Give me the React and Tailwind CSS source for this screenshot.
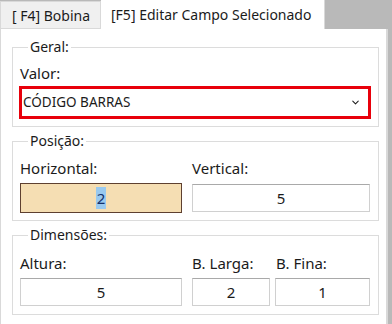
import { ChevronDown } from 'lucide-react';

const Field = ({ value, active = false, className = '' }) => (
    <div
        className={`flex items-center justify-center text-[15px] ${
            active
                ? 'bg-[#f5deb3] border border-[#5e4030] h-[30px]'
                : 'bg-white border border-[#d0d0d0] border-t-[#a9a9a9] h-[28px] mt-[1px]'
        } ${className}`}
    >
        {active ? <span className="bg-[#99c9ef] text-[#14306b] px-[1px] leading-[22px]">{value}</span> : value}
    </div>
);

const Group = ({ title, children, className = '' }) => (
    <fieldset className={`border border-[#dcdcdc] px-[6px] ${className}`}>
        <legend className="ml-[9px] px-[2px] leading-[20px] text-[14px]">{title}</legend>
        {children}
    </fieldset>
);

export default function App() {
    return (
        <div className="w-[392px] h-[324px] bg-[#b9b9b9] flex flex-col text-[#1b1b1b] font-['Noto_Sans',sans-serif] overflow-hidden">
            {/* Tabs */}
            <div className="flex h-[29px] shrink-0">
                <div className="w-[101px] mt-[1px] bg-[#f0f0f0] border border-[#d9d9d9] flex items-center pl-[11px] text-[14px] whitespace-nowrap">
                    [ F4] Bobina
                </div>
                <div className="w-[224px] bg-white border-r border-[#d9d9d9] flex items-center pl-[10px] text-[14px] whitespace-nowrap">
                    [F5] Editar Campo Selecionado
                </div>
            </div>

            {/* Panel */}
            <div className="flex-1 w-[388px] bg-white border-l border-r-2 border-[#d9d9d9] pl-[11px] pr-[7px] pt-[8px]">
                <Group title="Geral:" className="pb-[7px]">
                    <div className="mt-[6px] leading-[20px] text-[15px] pl-[1px]">Valor:</div>
                    <div className="mt-[3px] h-[33px] border-[3px] border-[#e8000b] flex items-center justify-between pl-[1px] pr-[7px] mr-[1px]">
                        <span className="text-[13.5px]">CÓDIGO BARRAS</span>
                        <ChevronDown className="w-[11px] h-[11px]" strokeWidth={2.2} />
                    </div>
                </Group>

                <Group title="Posição:" className="mt-[4px] pb-[7px]">
                    <div className="grid grid-cols-[162px_178px] gap-x-[10px] pl-[1px] mt-[7px]">
                        <div className="leading-[20px] text-[15px]">Horizontal:</div>
                        <div className="leading-[20px] text-[15px]">Vertical:</div>
                        <Field value="2" active className="mt-[5px]" />
                        <Field value="5" className="mt-[6px]" />
                    </div>
                </Group>

                <Group title="Dimensões:" className="mt-[4px] pb-[8px]">
                    <div className="grid grid-cols-[162px_10px_78px_5px_95px] pl-[1px] mt-[8px]">
                        <div className="col-start-1 leading-[20px] text-[15px]">Altura:</div>
                        <div className="col-start-3 leading-[20px] text-[15px] whitespace-nowrap">B. Larga:</div>
                        <div className="col-start-5 leading-[20px] text-[15px] pl-[1px]">B. Fina:</div>
                        <Field value="5" className="col-start-1 mt-[5px]" />
                        <Field value="2" className="col-start-3 mt-[5px]" />
                        <Field value="1" className="col-start-5 mt-[5px]" />
                    </div>
                </Group>
            </div>
        </div>
    );
}
